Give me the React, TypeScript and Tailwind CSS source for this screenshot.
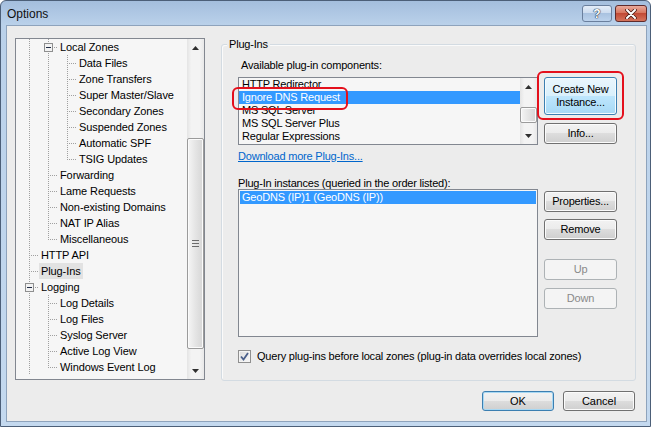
import React from "react";

const FONT = "font-['Liberation_Sans',Arial,sans-serif]";

type Guide = "v" | "t" | "l";
type Node = { t: string; g: Guide[]; box?: boolean; sel?: boolean };

const TREE: Node[] = [
  { t: "Local Zones", g: ["v", "t"], box: true },
  { t: "Data Files", g: ["v", "v", "t"] },
  { t: "Zone Transfers", g: ["v", "v", "t"] },
  { t: "Super Master/Slave", g: ["v", "v", "t"] },
  { t: "Secondary Zones", g: ["v", "v", "t"] },
  { t: "Suspended Zones", g: ["v", "v", "t"] },
  { t: "Automatic SPF", g: ["v", "v", "t"] },
  { t: "TSIG Updates", g: ["v", "v", "l"] },
  { t: "Forwarding", g: ["v", "t"] },
  { t: "Lame Requests", g: ["v", "t"] },
  { t: "Non-existing Domains", g: ["v", "t"] },
  { t: "NAT IP Alias", g: ["v", "t"] },
  { t: "Miscellaneous", g: ["v", "l"] },
  { t: "HTTP API", g: ["t"] },
  { t: "Plug-Ins", g: ["t"], sel: true },
  { t: "Logging", g: ["t"], box: true },
  { t: "Log Details", g: ["v", "t"] },
  { t: "Log Files", g: ["v", "t"] },
  { t: "Syslog Server", g: ["v", "t"] },
  { t: "Active Log View", g: ["v", "t"] },
  { t: "Windows Event Log", g: ["v", "l"] },
];

const PLUGINS = ["HTTP Redirector", "Ignore DNS Request", "MS SQL Server", "MS SQL Server Plus", "Regular Expressions"];

function GuideCell({ kind, box }: { kind: Guide; box?: boolean }) {
  const c = "#a0a0a0";
  return (
    <svg width="19" height="16" className="block shrink-0" shapeRendering="crispEdges">
      {kind !== "l" && <line x1="9.5" y1="0" x2="9.5" y2="16" stroke={c} strokeDasharray="1 1" />}
      {kind === "l" && <line x1="9.5" y1="0" x2="9.5" y2="9" stroke={c} strokeDasharray="1 1" />}
      {kind !== "v" && <line x1="11" y1="8.5" x2="19" y2="8.5" stroke={c} strokeDasharray="1 1" />}
      {box && (
        <g>
          <rect x="5.5" y="4.5" width="8" height="8" fill="#f2f2f2" stroke="#8e8f8f" />
          <line x1="7" y1="8.5" x2="12" y2="8.5" stroke="#1f2b45" />
        </g>
      )}
    </svg>
  );
}

function Arrow({ up }: { up?: boolean }) {
  return (
    <svg width="7" height="4" className="block">
      <polygon points={up ? "0,4 7,4 3.5,0" : "0,0 7,0 3.5,4"} fill="#2f2f2f" />
    </svg>
  );
}

function VScroll({ thumb, grip }: { thumb: string; grip?: boolean }) {
  return (
    <div className="w-[17px] shrink-0 h-full flex flex-col bg-[linear-gradient(90deg,#e4e4e4,#f3f3f3_25%,#f3f3f3_75%,#e8e8e8)]">
      <div className="h-[17px] shrink-0 flex items-center justify-center">
        <Arrow up />
      </div>
      <div className="flex-1 flex flex-col">
        <div
          className={`${thumb} rounded-[2px] border border-[#9b9b9b] bg-[linear-gradient(90deg,#f5f5f5,#e6e6e6_45%,#d6d6d6)] shadow-[inset_0_0_0_1px_#fbfbfb] flex items-center justify-center`}
        >
          {grip && (
            <svg width="7" height="7" className="block">
              <line x1="0" y1="0.5" x2="7" y2="0.5" stroke="#6b6b6b" />
              <line x1="0" y1="3.5" x2="7" y2="3.5" stroke="#6b6b6b" />
              <line x1="0" y1="6.5" x2="7" y2="6.5" stroke="#6b6b6b" />
            </svg>
          )}
        </div>
      </div>
      <div className="h-[17px] shrink-0 flex items-center justify-center">
        <Arrow />
      </div>
    </div>
  );
}

const btn =
  "flex items-center justify-center rounded-[3px] border text-[11px] leading-[13px] text-center";
const btnNormal =
  "border-[#707070] text-black bg-[linear-gradient(#f2f2f2_0%,#ebebeb_50%,#dddddd_50%,#cfcfcf_100%)] shadow-[inset_0_0_0_1px_#fbfbfb]";
const btnDisabled = "border-[#adb2b5] text-[#8a8a8a] bg-[#f4f4f4]";

export default function App() {
  return (
    <div
      className={`${FONT} relative w-[651px] h-[427px] flex flex-col overflow-hidden rounded-t-[6px] border border-[#4c5f78] bg-[linear-gradient(#a4bedd_0px,#bad1ea_24px,#c4d9ef_100%)]`}
    >
      {/* Title bar */}
      <div className="h-[24px] shrink-0 flex items-start pl-[6px] pr-[3px]">
        <span className="mt-[5px] text-[12px] leading-[16px] text-[#101010]">Options</span>
        <div className="ml-auto mt-[4px] flex gap-[3px]">
          <div className="w-[30px] h-[17px] rounded-[3px] border border-[#6a7f9d] bg-[linear-gradient(#e4edf8_0%,#cddcef_45%,#a9c2e0_50%,#bcd2ec_100%)] flex items-center justify-center">
            <span className="text-[12px] leading-[12px] font-bold text-white [text-shadow:0_0_1px_#1d2f4a,0_0_1px_#1d2f4a,0_0_1px_#1d2f4a]">?</span>
          </div>
          <div className="w-[32px] h-[17px] rounded-[3px] border border-[#5f2b2b] bg-[linear-gradient(#e9a99b_0%,#d8765f_45%,#c24a35_50%,#d4735c_100%)] flex items-center justify-center">
            <svg width="12" height="10" className="block">
              <path d="M2 1 L10 9 M10 1 L2 9" stroke="#4a1a14" strokeWidth="3.6" strokeLinecap="round" />
              <path d="M2 1 L10 9 M10 1 L2 9" stroke="#ffffff" strokeWidth="2" strokeLinecap="round" />
            </svg>
          </div>
        </div>
      </div>

      {/* Client area */}
      <div className="ml-[5px] mr-[3px] mb-[4px] flex-1 flex flex-col border border-[#8ea3bc] bg-[#ececec]">
        <div className="flex items-start pl-[8px] pt-[12px]">
          {/* Tree */}
          <div className="w-[190px] h-[342px] flex border border-[#828790] bg-[#f6f6f6]">
            <div className="flex-1 overflow-hidden pl-[4px] text-[11px] leading-[16px] tracking-[-0.1px] text-black">
              {TREE.map((n) => (
                <div key={n.t} className="h-[16px] flex items-center">
                  {n.g.map((k, i) => (
                    <GuideCell key={i} kind={k} box={n.box && i === n.g.length - 1} />
                  ))}
                  <span className={`h-[16px] px-[2px] whitespace-nowrap ${n.sel ? "bg-[#e2e2e2]" : ""}`}>{n.t}</span>
                </div>
              ))}
            </div>
            <VScroll thumb="mt-[82px] h-[211px]" grip />
          </div>

          {/* Plug-Ins group */}
          <div className="relative ml-[16px] mt-[6px] w-[415px] h-[337px] rounded-[3px] border border-[#d3dbe2] shadow-[inset_1px_1px_0_#fafafa] flex flex-col pl-[16px] tracking-[-0.2px]">
            <span className="absolute -top-[7px] left-[5px] px-[2px] bg-[#ececec] text-[11px] leading-[13px] text-black">
              Plug-Ins
            </span>
            <div className="flex">
              {/* Lists column */}
              <div className="w-[300px] flex flex-col text-[11px] text-black">
                <span className="mt-[14px] pl-[3px] leading-[13px]">Available plug-in components:</span>
                <div className="mt-[5px] h-[68px] flex border border-[#828790] bg-[#f6f6f6]">
                  <div className="flex-1 overflow-hidden">
                    {PLUGINS.map((p) => (
                      <div
                        key={p}
                        className={`h-[13px] leading-[13px] pl-[3px] whitespace-nowrap ${p === "Ignore DNS Request" ? "bg-[#3399ff] text-white" : ""}`}
                      >
                        {p}
                      </div>
                    ))}
                  </div>
                  <VScroll thumb="mt-[12px] h-[16px]" />
                </div>
                <span className="mt-[5px] leading-[13px] text-[#0066cc] underline">Download more Plug-Ins...</span>
                <span className="mt-[14px] leading-[12px] whitespace-nowrap">Plug-In instances (queried in the order listed):</span>
                <div className="h-[148px] border border-[#828790] bg-[#f6f6f6] pt-[1px] px-[1px]">
                  <div className="h-[13px] leading-[13px] pl-[2px] bg-[#3399ff] text-white whitespace-nowrap">
                    GeoDNS (IP)1 (GeoDNS (IP))
                  </div>
                </div>
              </div>

              {/* Buttons column */}
              <div className="ml-[6px] w-[73px] flex flex-col">
                <div className={`${btn} mt-[32px] h-[38px] border-[#3c7fb1] text-black bg-[linear-gradient(#eaf6fd_0%,#d9f0fc_50%,#bee6fd_50%,#a7d9f5_100%)] shadow-[inset_0_0_0_1px_#f4fbfe]`}>
                  Create New
                  <br />
                  Instance...
                </div>
                <div className={`${btn} ${btnNormal} mt-[8px] h-[21px]`}>Info...</div>
                <div className={`${btn} ${btnNormal} mt-[47px] h-[21px]`}>Properties...</div>
                <div className={`${btn} ${btnNormal} mt-[7px] h-[21px]`}>Remove</div>
                <div className={`${btn} ${btnDisabled} mt-[19px] h-[21px]`}>Up</div>
                <div className={`${btn} ${btnDisabled} mt-[8px] h-[21px]`}>Down</div>
              </div>
            </div>

            {/* Checkbox */}
            <div className="mt-[13px] flex items-center gap-[6px] text-[11px] leading-[13px] text-black">
              <div className="w-[13px] h-[13px] shrink-0 border border-[#8f8f8f] bg-[linear-gradient(135deg,#dcdcdc,#f8f8f8)] shadow-[inset_0_0_0_1px_#f4f4f4] flex items-center justify-center">
                <svg width="9" height="9" className="block">
                  <path d="M1 4.5 L3.5 7.5 L8 1" fill="none" stroke="#4a5f8a" strokeWidth="1.8" />
                </svg>
              </div>
              <span className="whitespace-nowrap">Query plug-ins before local zones (plug-in data overrides local zones)</span>
            </div>
          </div>
        </div>

        {/* Dialog buttons */}
        <div className="mt-[10px] flex justify-end gap-[9px] pr-[11px]">
          <div className={`${btn} w-[72px] h-[20px] border-[#3c7fb1] text-black bg-[linear-gradient(#f2f2f2_0%,#ebebeb_50%,#dddddd_50%,#cfcfcf_100%)] shadow-[inset_0_0_0_1px_#a8d8f3]`}>
            OK
          </div>
          <div className={`${btn} ${btnNormal} w-[72px] h-[20px]`}>Cancel</div>
        </div>
      </div>

      {/* Red annotation marks */}
      <div className="absolute left-[231px] top-[86px] w-[116px] h-[23px] rounded-[6px] border-2 border-[#e4101c]" />
      <div className="absolute left-[536px] top-[70px] w-[87px] h-[49px] rounded-[6px] border-2 border-[#e4101c]" />
    </div>
  );
}
